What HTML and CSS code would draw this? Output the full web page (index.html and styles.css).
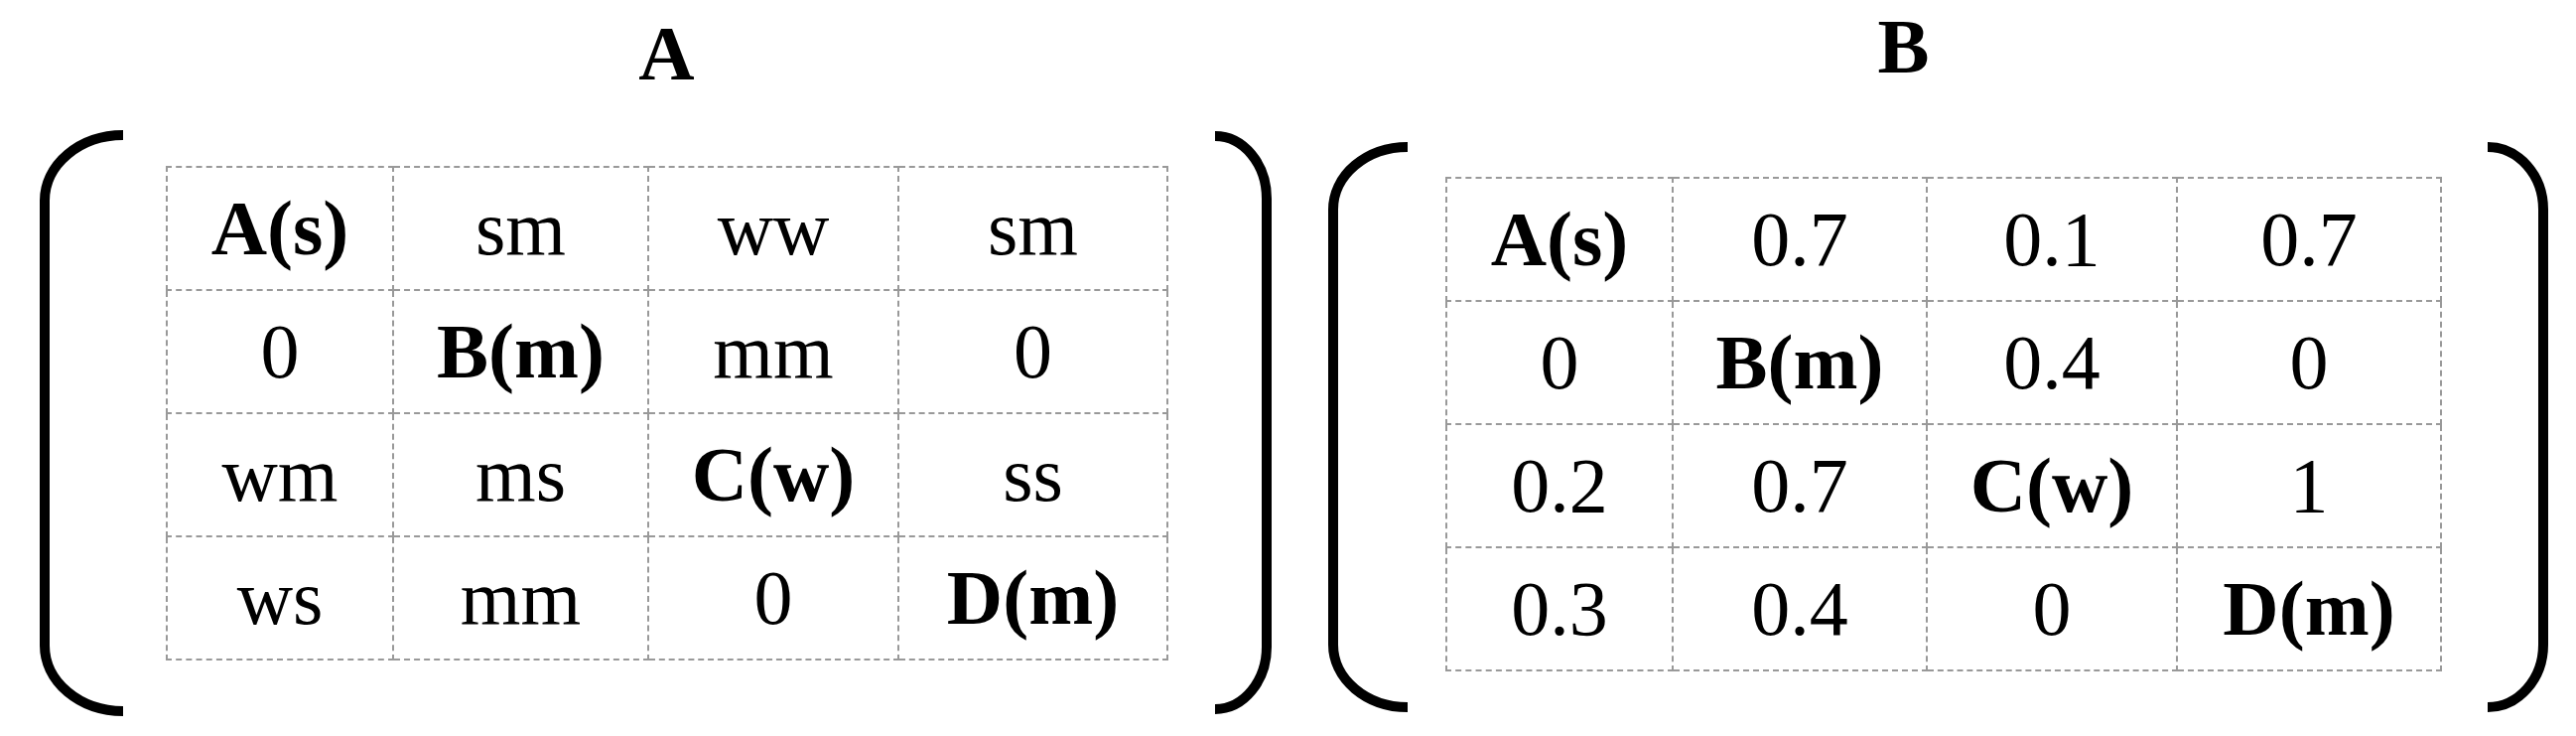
FILE: index.html
```html
<!DOCTYPE html>
<html lang="en">
<head>
<meta charset="utf-8">
<title>Matrices A and B</title>
<link rel="stylesheet" href="styles.css">
</head>
<body>
<main class="page">
  <section class="matrix matrix-a">
    <h2 class="title">A</h2>
    <div class="row">
      <svg class="bracket bl-a" viewBox="0 0 92 596" aria-hidden="true">
        <path d="M88,8 A79,66 0 0 0 9,74 L9,522 A79,66 0 0 0 88,588"/>
      </svg>
      <table class="grid">
        <colgroup>
          <col class="w228"><col class="w257"><col class="w252"><col class="w271">
        </colgroup>
        <tbody>
          <tr><td class="b">A(s)</td><td>sm</td><td>ww</td><td>sm</td></tr>
          <tr><td>0</td><td class="b">B(m)</td><td>mm</td><td>0</td></tr>
          <tr><td>wm</td><td>ms</td><td class="b">C(w)</td><td>ss</td></tr>
          <tr><td>ws</td><td>mm</td><td>0</td><td class="b">D(m)</td></tr>
        </tbody>
      </table>
      <svg class="bracket br-a" viewBox="0 0 65 596" aria-hidden="true">
        <path d="M4,9 A52,63 0 0 1 56,72 L56,522 A52,63 0 0 1 4,586"/>
      </svg>
    </div>
  </section>
  <section class="matrix matrix-b">
    <h2 class="title">B</h2>
    <div class="row">
      <svg class="bracket bl-b" viewBox="0 0 90 580" aria-hidden="true">
        <path d="M84,8 A75,63 0 0 0 9,71 L9,509 A75,63 0 0 0 84,572"/>
      </svg>
      <table class="grid">
        <colgroup>
          <col class="w228"><col class="w256"><col class="w252"><col class="w266">
        </colgroup>
        <tbody>
          <tr><td class="b">A(s)</td><td>0.7</td><td>0.1</td><td>0.7</td></tr>
          <tr><td>0</td><td class="b">B(m)</td><td>0.4</td><td>0</td></tr>
          <tr><td>0.2</td><td>0.7</td><td class="b">C(w)</td><td>1</td></tr>
          <tr><td>0.3</td><td>0.4</td><td>0</td><td class="b">D(m)</td></tr>
        </tbody>
      </table>
      <svg class="bracket br-b" viewBox="0 0 69 580" aria-hidden="true">
        <path d="M4,8 A56,63 0 0 1 60,71 L60,509 A56,63 0 0 1 4,572"/>
      </svg>
    </div>
  </section>
</main>
</body>
</html>
```

FILE: styles.css
```css
html, body {
  margin: 0;
  padding: 0;
  background: #ffffff;
}

body {
  width: 2595px;
  height: 741px;
  overflow: hidden;
  font-family: "Liberation Serif", "Times New Roman", serif;
  color: #000000;
}

.page {
  display: flex;
  align-items: flex-start;
  padding-left: 36px;
}

.matrix {
  display: flex;
  flex-direction: column;
}

.title {
  margin: 0;
  font-size: 78px;
  line-height: 78px;
  font-weight: bold;
  text-align: center;
}

.matrix-a .title {
  padding-top: 15px;
  padding-left: 22px;
}

.matrix-b {
  margin-left: 49px;
}

.matrix-b .title {
  padding-top: 8px;
  padding-right: 70px;
}

.row {
  display: flex;
  align-items: flex-start;
}

.matrix-a .row {
  margin-top: 35px;
}

.matrix-b .row {
  margin-top: 54px;
}

.bracket {
  display: block;
  flex: none;
}

.bracket path {
  fill: none;
  stroke: #000000;
  stroke-width: 10;
}

.bl-a { width: 92px; height: 596px; }
.br-a { width: 65px; height: 596px; margin-left: 43px; }
.bl-b { width: 90px; height: 580px; }
.br-b { width: 69px; height: 580px; margin-left: 42px; }

.grid {
  border-collapse: collapse;
  table-layout: fixed;
  flex: none;
}

.matrix-a .grid {
  margin-left: 39px;
  margin-top: 39px;
  width: 1008px;
}

.matrix-b .grid {
  margin-left: 32px;
  margin-top: 38px;
  width: 1002px;
}

.w228 { width: 228px; }
.w256 { width: 256px; }
.w257 { width: 257px; }
.w252 { width: 252px; }
.w266 { width: 266px; }
.w271 { width: 271px; }

.grid tr {
  height: 124px;
}

.grid td {
  border: 2px dashed #999999;
  padding: 0;
  text-align: center;
  vertical-align: middle;
  font-size: 78px;
  line-height: 1;
  white-space: nowrap;
}

.grid td.b {
  font-weight: bold;
}
```
